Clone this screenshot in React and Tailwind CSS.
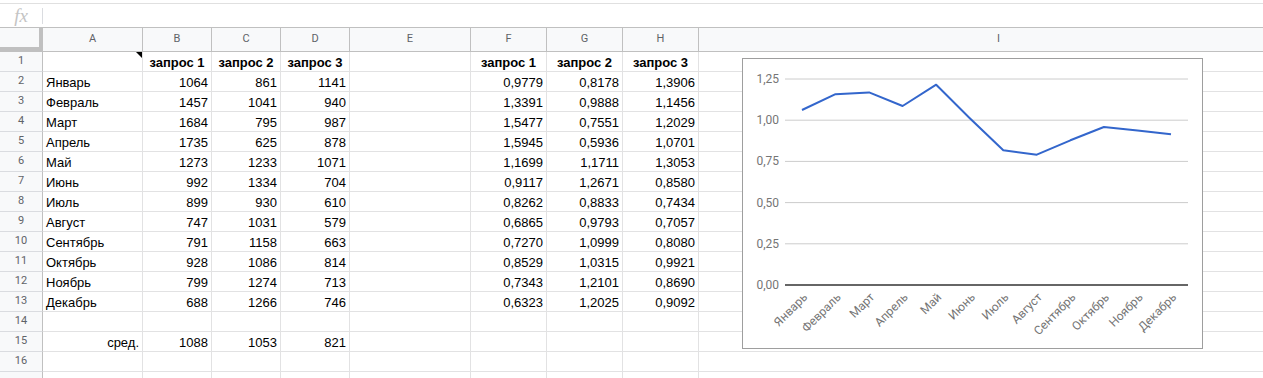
import React from 'react'

const months = [
  ['Январь', 1064, 861, 1141, '0,9779', '0,8178', '1,3906'],
  ['Февраль', 1457, 1041, 940, '1,3391', '0,9888', '1,1456'],
  ['Март', 1684, 795, 987, '1,5477', '0,7551', '1,2029'],
  ['Апрель', 1735, 625, 878, '1,5945', '0,5936', '1,0701'],
  ['Май', 1273, 1233, 1071, '1,1699', '1,1711', '1,3053'],
  ['Июнь', 992, 1334, 704, '0,9117', '1,2671', '0,8580'],
  ['Июль', 899, 930, 610, '0,8262', '0,8833', '0,7434'],
  ['Август', 747, 1031, 579, '0,6865', '0,9793', '0,7057'],
  ['Сентябрь', 791, 1158, 663, '0,7270', '1,0999', '0,8080'],
  ['Октябрь', 928, 1086, 814, '0,8529', '1,0315', '0,9921'],
  ['Ноябрь', 799, 1274, 713, '0,7343', '1,2101', '0,8690'],
  ['Декабрь', 688, 1266, 746, '0,6323', '1,2025', '0,9092'],
]

const cols = [
  { key: 'A', w: 'w-[100px]' },
  { key: 'B', w: 'w-[69px]' },
  { key: 'C', w: 'w-[69px]' },
  { key: 'D', w: 'w-[69px]' },
  { key: 'E', w: 'w-[121px]' },
  { key: 'F', w: 'w-[76px]' },
  { key: 'G', w: 'w-[76px]' },
  { key: 'H', w: 'w-[76px]' },
  { key: 'I', w: 'w-[600px]' },
]

const header = ['запрос 1', 'запрос 2', 'запрос 3']

function buildRows() {
  const out = []
  out.push(['', ...header, '', ...header, ''].map((v, i) => ({ v, bold: i > 0 && v !== '', align: 'center', note: i === 0 })))
  months.forEach((m) => {
    const [name, b, c, d, f, g, h] = m
    out.push([
      { v: name, align: 'left' },
      { v: b, align: 'right' },
      { v: c, align: 'right' },
      { v: d, align: 'right' },
      { v: '' },
      { v: f, align: 'right' },
      { v: g, align: 'right' },
      { v: h, align: 'right' },
      { v: '' },
    ])
  })
  out.push(cols.map(() => ({ v: '' })))
  out.push([
    { v: 'сред.', align: 'right' },
    { v: 1088, align: 'right' },
    { v: 1053, align: 'right' },
    { v: 821, align: 'right' },
    { v: '' }, { v: '' }, { v: '' }, { v: '' }, { v: '' },
  ])
  out.push(cols.map(() => ({ v: '' })))
  out.push(cols.map(() => ({ v: '' })))
  return out
}

const alignCls = {
  left: 'justify-start pl-[3px]',
  right: 'justify-end pr-[3px]',
  center: 'justify-center',
}

function Chart() {
  const avg = months.map((m) => (parseFloat(m[4].replace(',', '.')) + parseFloat(m[5].replace(',', '.')) + parseFloat(m[6].replace(',', '.'))) / 3)
  const y = (v) => 226 - v * 164.8
  const x = (i) => 59 + i * 33.55
  const ticks = ['0,00', '0,25', '0,50', '0,75', '1,00', '1,25']
  const pts = avg.map((v, i) => `${x(i).toFixed(1)},${y(v).toFixed(1)}`).join(' ')

  return (
    <div className="absolute left-[742px] top-[58px] h-[291px] w-[461px] border border-[#9e9e9e] bg-white">
      <svg width="459" height="289" className="block font-['Roboto',Arial,sans-serif]">
        {ticks.map((t, i) => {
          const yy = y(i * 0.25)
          return (
            <g key={t}>
              <line x1="42" x2="445" y1={yy} y2={yy} stroke={i === 0 ? '#333333' : '#cccccc'} strokeWidth={i === 0 ? 1.5 : 1} />
              <text x="36" y={yy + 4} textAnchor="end" fontSize="12" fill="#757575">{t}</text>
            </g>
          )
        })}
        <polyline points={pts} fill="none" stroke="#3366cc" strokeWidth="2" strokeLinejoin="round" />
        {months.map((m, i) => (
          <text
            key={m[0]}
            x={x(i) + 6}
            y={239}
            textAnchor="end"
            fontSize="12"
            fill="#757575"
            transform={`rotate(-45 ${x(i) + 6} 239)`}
          >
            {m[0]}
          </text>
        ))}
      </svg>
    </div>
  )
}

export default function App() {
  const rows = buildRows()

  return (
    <div className="relative h-[378px] w-[1263px] overflow-hidden bg-white font-['Liberation_Sans',Arial,sans-serif] text-[13px] text-black">
      <div className="h-[4px] border-b border-[#e0e0e0] bg-white" />
      <div className="flex h-[24px] items-center border-b border-[#c0c0c0]">
        <div className="flex w-[42px] justify-center font-['Liberation_Serif',serif] text-[19px] italic leading-none text-[#c4c4c4]">fx</div>
        <div className="h-[16px] w-px bg-[#dadce0]" />
      </div>

      <div className="flex h-[24px] border-b border-[#c0c0c0] bg-[#f8f9fa] font-['Roboto',Arial,sans-serif] text-[11px] text-[#5f6368]">
        <div className="w-[43px] shrink-0 border-r-4 border-b-4 border-[#c0c0c0]" />
        {cols.map((c) => (
          <div key={c.key} className={`${c.w} flex shrink-0 items-center justify-center border-r border-[#c0c0c0]`}>
            {c.key}
          </div>
        ))}
      </div>

      {rows.map((row, ri) => (
        <div key={ri} className="flex h-[20px]">
          <div className="flex w-[43px] shrink-0 items-center justify-center border-r border-b border-r-[#c0c0c0] border-b-[#dadce0] bg-[#f8f9fa] font-['Roboto',Arial,sans-serif] text-[11px] text-[#5f6368]">
            {ri < 16 ? ri + 1 : ''}
          </div>
          {row.map((cell, ci) => (
            <div
              key={ci}
              className={`${cols[ci].w} relative flex shrink-0 items-center overflow-hidden whitespace-nowrap border-r border-b border-[#e2e2e3] pt-[2px] leading-[17px] ${alignCls[cell.align || 'left']} ${cell.bold ? 'font-bold' : ''}`}
            >
              {cell.v}
              {cell.note ? (
                <span className="absolute right-0 top-0 h-0 w-0 border-t-[6px] border-l-[6px] border-t-black border-l-transparent" />
              ) : null}
            </div>
          ))}
        </div>
      ))}

      <Chart />
    </div>
  )
}
